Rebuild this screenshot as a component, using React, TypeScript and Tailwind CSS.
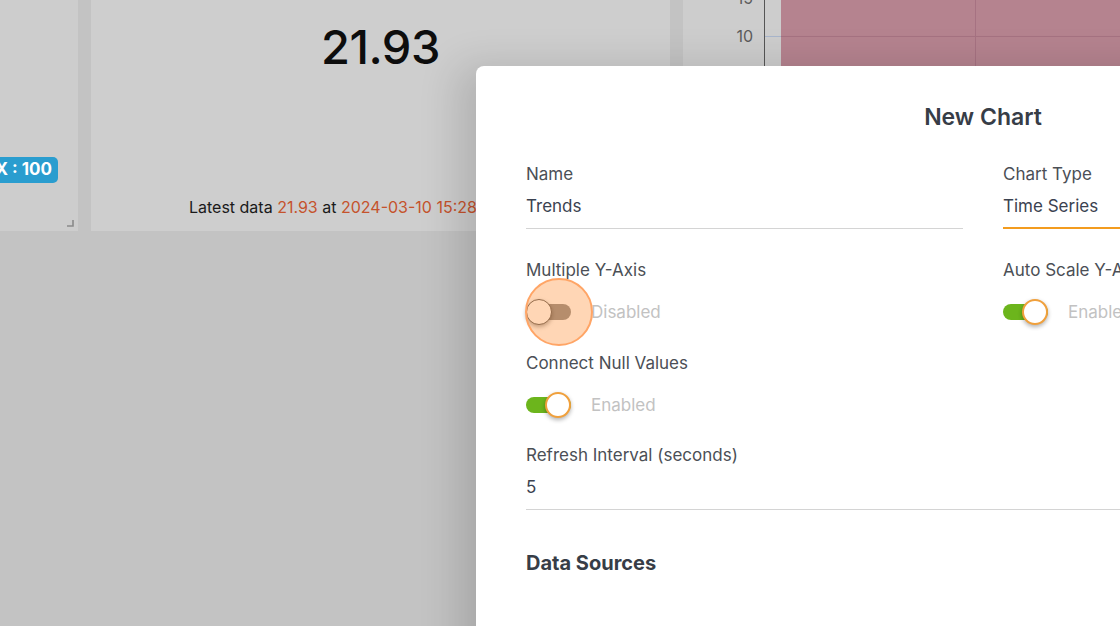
import React from "react";

function Toggle({ on, ripple }: { on: boolean; ripple?: boolean }) {
  return (
    <div className="relative w-[45px] h-[26px] flex items-center shrink-0">
      <div className={on ? "w-[45px] h-[16px] rounded-full bg-[#6cb51c]" : "w-[45px] h-[16px] rounded-full bg-[#8e8e8e]"} />
      <div
        className={
          on
            ? "absolute top-0 left-[19px] w-[26px] h-[26px] rounded-full bg-white border-2 border-[#f0a03c] shadow-[0_2px_4px_rgba(0,0,0,0.3)]"
            : "absolute top-0 left-0 w-[26px] h-[26px] rounded-full bg-white border-[1.5px] border-[#5a5a5a] shadow-[0_2px_4px_rgba(0,0,0,0.35)]"
        }
      />
      {ripple && (
        <div className="absolute left-[-1px] top-[-21px] w-[68px] h-[68px] rounded-full bg-[rgba(255,140,50,0.36)] border-2 border-[#ffa566]" />
      )}
    </div>
  );
}

function SwitchField({ label, on, ripple }: { label: string; on: boolean; ripple?: boolean }) {
  return (
    <div className="flex flex-col">
      <div className="text-[17px] leading-[24px] text-[#4b4f56]">{label}</div>
      <div className="mt-[17px] flex items-center gap-[20px]">
        <Toggle on={on} ripple={ripple} />
        <span className="text-[17px] leading-[24px] text-[#c2c2c2]">{on ? "Enabled" : "Disabled"}</span>
      </div>
    </div>
  );
}

function TextField({ label, value, focused }: { label: string; value: string; focused?: boolean }) {
  return (
    <div className="flex flex-col">
      <div className="text-[17px] leading-[24px] text-[#4b4f56]">{label}</div>
      <div
        className={
          focused
            ? "mt-[8px] pb-[9px] text-[17px] leading-[24px] text-[#3b4250] border-b-2 border-[#f39c1f]"
            : "mt-[8px] pb-[10px] text-[17px] leading-[24px] text-[#3b4250] border-b border-[#d4d4d4]"
        }
      >
        {value}
      </div>
    </div>
  );
}

export default function App() {
  return (
    <div className="relative w-[1120px] h-[626px] overflow-hidden bg-[#c3c3c3] font-['Inter',sans-serif]">
      {/* dashboard behind the dialog */}
      <div className="flex h-[231px] gap-[13px]">
        <div className="w-[78px] shrink-0 bg-[#cdcdcd] relative flex flex-col justify-end pb-[48px]">
          <div className="-ml-[34px] w-[92px] h-[26px] rounded-[5px] bg-[#2a9dcf] text-white font-bold text-[17px] flex items-center justify-end pr-[6px]">
            MAX : 100
          </div>
          <svg className="absolute right-[4px] bottom-[4px]" width="8" height="8" viewBox="0 0 8 8">
            <path d="M7 1 V7 H1" stroke="#8a8a8a" strokeWidth="1.6" fill="none" />
          </svg>
        </div>
        <div className="w-[579px] shrink-0 bg-[#cecece] flex flex-col items-center">
          <div className="mt-[20px] text-[47px] leading-[54px] font-medium text-[#0d0d0d] tracking-[-0.5px]">21.93</div>
          <div className="mt-auto mb-[14px] text-[16px] leading-[20px] text-[#1a1a1a] whitespace-nowrap">
            Latest data <span className="text-[#c5532c]">21.93</span> at{" "}
            <span className="text-[#c5532c]">2024-03-10 15:28:41.3 +08:00</span>
          </div>
        </div>
        <div className="flex-1 bg-[#cdcdcd]">
          <svg width="437" height="231" viewBox="0 0 437 231">
            <text x="70" y="42" textAnchor="end" fontSize="16" fill="#5c5c5c" fontFamily="Inter, sans-serif">10</text>
            <text x="70" y="4" textAnchor="end" fontSize="16" fill="#5c5c5c" fontFamily="Inter, sans-serif">15</text>
            <rect x="98" y="0" width="339" height="231" fill="#b5838f" />
            <line x1="82" y1="36.5" x2="98" y2="36.5" stroke="#a9b6cc" strokeWidth="1" />
            <line x1="98" y1="36.5" x2="437" y2="36.5" stroke="#a67282" strokeWidth="1" />
            <line x1="292.5" y1="0" x2="292.5" y2="231" stroke="#a67282" strokeWidth="1" />
            <line x1="81.5" y1="0" x2="81.5" y2="231" stroke="#555" strokeWidth="1" />
          </svg>
        </div>
      </div>

      {/* dialog */}
      <div className="absolute left-[476px] top-[66px] w-[1014px] h-[640px] bg-white rounded-tl-[8px] shadow-[-18px_0_40px_rgba(0,0,0,0.14)] pt-[36px] px-[50px]">
        <h2 className="text-center text-[23px] leading-[30px] font-semibold text-[#373d47]">New Chart</h2>
        <div className="mt-[30px] grid grid-cols-2 gap-x-[40px]">
          <TextField label="Name" value="Trends" />
          <TextField label="Chart Type" value="Time Series" focused />
          <div className="mt-[29px]">
            <SwitchField label="Multiple Y-Axis" on={false} ripple />
          </div>
          <div className="mt-[29px]">
            <SwitchField label="Auto Scale Y-Axis" on />
          </div>
          <div className="mt-[26px] col-span-2">
            <SwitchField label="Connect Null Values" on />
          </div>
          <div className="mt-[25px] col-span-2">
            <TextField label="Refresh Interval (seconds)" value="5" />
          </div>
        </div>
        <h3 className="mt-[40px] text-[20px] leading-[26px] font-bold text-[#373d47]">Data Sources</h3>
      </div>
    </div>
  );
}
